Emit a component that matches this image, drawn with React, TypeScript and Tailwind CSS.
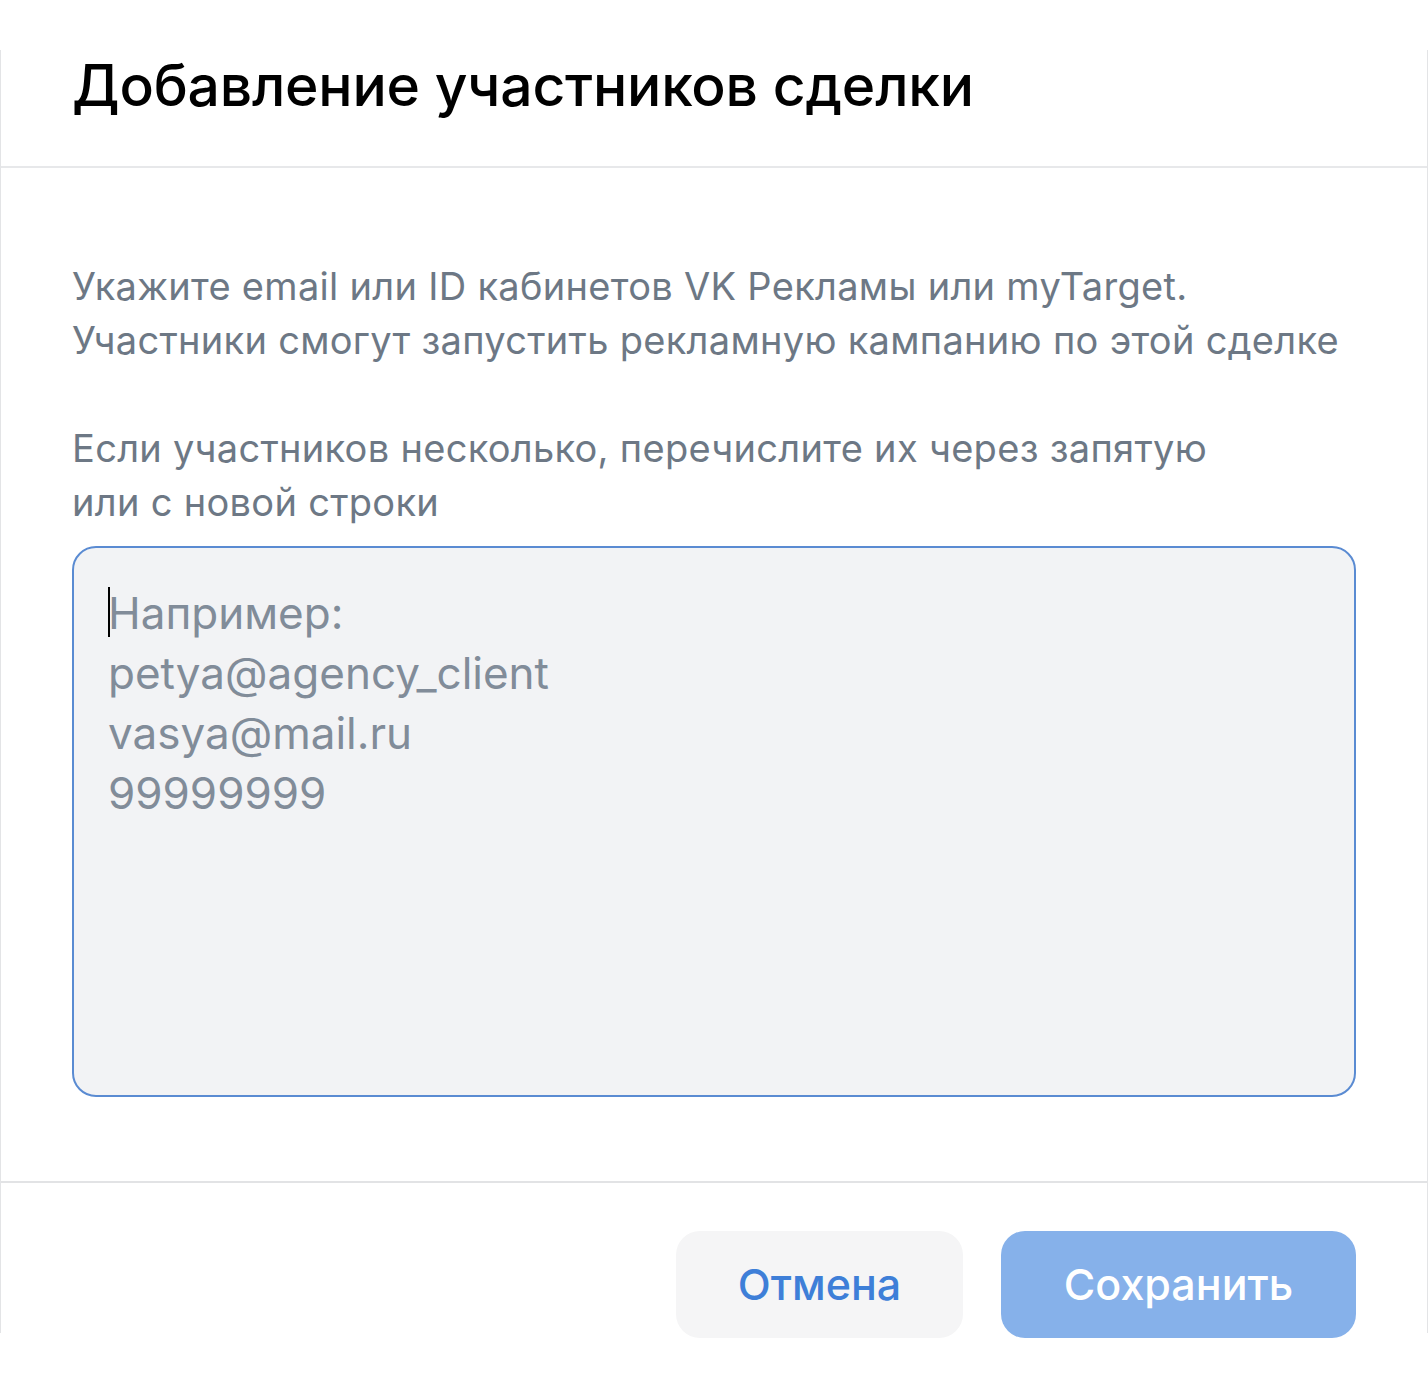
import React from 'react';

const font = { fontFamily: 'Inter, "Noto Sans", sans-serif' };

const placeholder = 'Например:\npetya@agency_client\nvasya@mail.ru\n99999999';

export default function App() {
    return (
        <div className="w-[1428px] h-[1386px] bg-white overflow-hidden" style={font}>
            <div className="mt-[50px] h-[1283px] border-x border-[#e3e4e6] flex flex-col">
                {/* Header */}
                <div className="shrink-0 h-[118px] border-b-2 border-[#e7e8ea] px-[71px]">
                    <h1 className="text-[57px] leading-[72px] font-medium text-black tracking-[-0.2px]">
                        Добавление участников сделки
                    </h1>
                </div>

                {/* Body */}
                <div className="shrink-0 px-[71px] pt-[91px] pb-[84px]">
                    <p className="text-[38px] leading-[54px] text-[#6d7885] tracking-[0.3px]">
                        Укажите email или ID кабинетов VK Рекламы или myTarget.
                        <br />
                        Участники смогут запустить рекламную кампанию по этой сделке
                    </p>
                    <p className="mt-[54px] text-[38px] leading-[54px] text-[#6d7885] tracking-[0.3px]">
                        Если участников несколько, перечислите их через запятую
                        <br />
                        или с новой строки
                    </p>
                    <div className="relative mt-[17px]">
                        <textarea
                            readOnly
                            placeholder={placeholder}
                            className="block w-full h-[551px] resize-none rounded-[24px] border-2 border-[#5a8bd2] bg-[#f2f3f5] pl-[34px] pr-[34px] pt-[35px] text-[44px] leading-[60px] text-black placeholder:text-[#818c99] outline-none"
                            style={font}
                        />
                        <span className="absolute left-[36px] top-[41px] w-[2px] h-[50px] bg-black" />
                    </div>
                </div>

                {/* Footer */}
                <div className="shrink-0 h-[160px] border-t-2 border-[#e2e3e5] flex justify-end items-start gap-[38px] pt-[48px] pr-[71px]">
                    <button className="w-[287px] h-[107px] rounded-[24px] bg-[#f5f5f6] text-[#3e7fd8] text-[43px] font-medium">
                        Отмена
                    </button>
                    <button className="w-[355px] h-[107px] rounded-[24px] bg-[#86b1ea] text-white text-[43px] font-medium">
                        Сохранить
                    </button>
                </div>
            </div>
        </div>
    );
}
